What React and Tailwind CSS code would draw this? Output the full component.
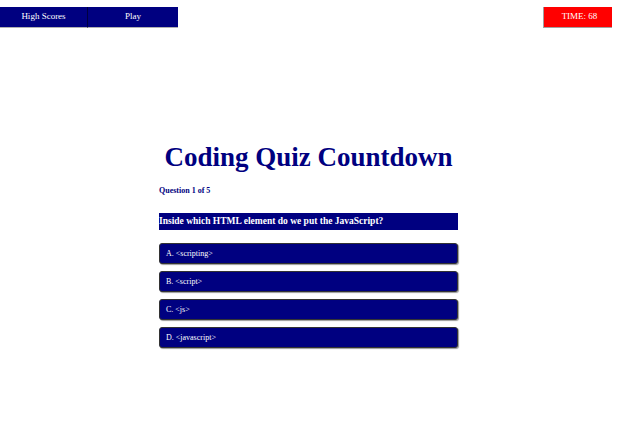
const answers = ["A. <scripting>", "B. <script>", "C. <js>", "D. <javascript>"];

export default function App() {
  return (
    <div className="min-h-[421px] bg-white" style={{ fontFamily: "'Liberation Serif', 'Times New Roman', serif" }}>
      {/* Top bar */}
      <div className="flex items-start justify-between pt-[7px] pr-[10px]">
        <div className="flex">
          <button className="w-[88px] h-[21px] bg-[#000080] text-white text-[9px] border-r border-b border-r-[#000040] border-b-[#b0b0b0]">
            High Scores
          </button>
          <button className="w-[90px] h-[21px] bg-[#000080] text-white text-[9px] border-b border-b-[#b0b0b0]">
            Play
          </button>
        </div>
        <div className="w-[69px] h-[21px] bg-[#ff0000] text-white text-[9px] flex items-center justify-center pl-[3px] border-b border-l border-[#a0a0a0]">
          TIME: 68
        </div>
      </div>

      {/* Quiz */}
      <div className="ml-[159px] w-[299px] pt-[116px]">
        <h1 className="text-[27px] font-bold text-[#000080] text-center leading-none">
          Coding Quiz Countdown
        </h1>
        <p className="mt-[14px] text-[8px] font-bold text-[#000080]">Question 1 of 5</p>
        <div className="mt-[16px] h-[17px] bg-[#000080] text-white text-[9.5px] font-bold flex items-center">
          Inside which HTML element do we put the JavaScript?
        </div>
        <div className="mt-[13px] flex flex-col gap-[7px]">
          {answers.map((a) => (
            <button
              key={a}
              className="h-[21px] w-full bg-[#000080] text-white text-[8px] text-left pl-[6px] rounded-[3px] border border-[#333] shadow-[1px_1px_1px_rgba(0,0,0,0.4)]"
            >
              {a}
            </button>
          ))}
        </div>
      </div>
    </div>
  );
}
